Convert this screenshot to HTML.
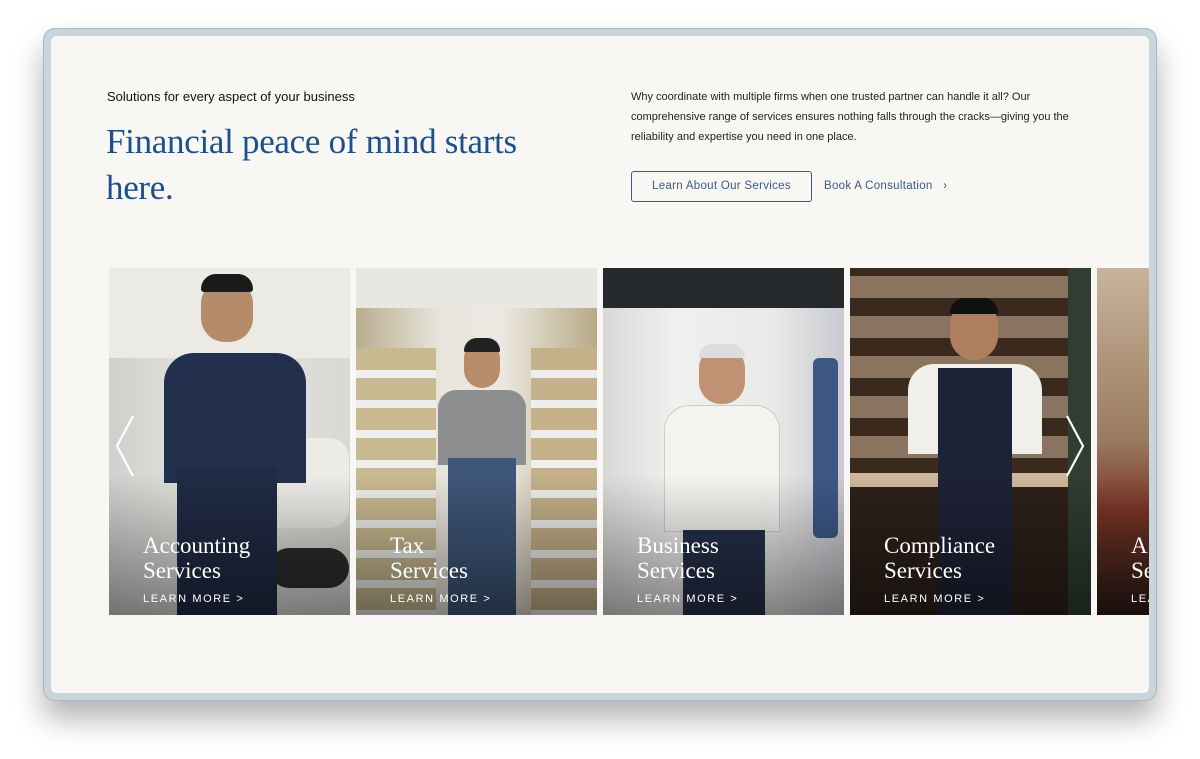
<!DOCTYPE html>
<html><head><meta charset="utf-8"><style>
*{margin:0;padding:0;box-sizing:border-box}
body{width:1200px;height:759px;background:#fff;position:relative;overflow:hidden;font-family:"Liberation Sans",sans-serif}
.frame{position:absolute;left:43px;top:28px;width:1114px;height:673px;border-radius:12px;background:#c8d5da;box-shadow:0 18px 30px rgba(0,0,0,.3);border:1px solid #a9b8be}
.inner{position:absolute;left:51px;top:36px;width:1098px;height:657px;background:#f8f7f3;border-radius:6px;overflow:hidden}
.eyebrow{position:absolute;left:56px;top:53px;font-size:13px;color:#111}
h1{position:absolute;left:55px;top:83px;font-family:"Liberation Serif",serif;font-weight:400;font-size:35px;line-height:46px;color:#1d4f8c;width:460px;letter-spacing:-0.3px}
.desc{position:absolute;left:580px;top:51px;width:450px;font-size:11px;line-height:20px;color:#222}
.btn{position:absolute;left:580px;top:135px;width:181px;height:31px;border:1px solid #3d5a84;border-radius:3px;font-size:11.5px;color:#3d5a84;text-align:center;line-height:29px;letter-spacing:.3px}
.link{position:absolute;left:773px;top:144px;font-size:11.5px;color:#3d5a84;letter-spacing:.3px}
.card{position:absolute;top:232px;width:241px;height:347px;overflow:hidden}
.card .t{position:absolute;left:34px;top:265px;font-family:"Liberation Serif",serif;font-size:23px;line-height:25px;color:#fff}
.card .l{position:absolute;left:34px;top:325px;font-size:11px;letter-spacing:1.6px;color:#fff}
.shade{position:absolute;left:0;right:0;bottom:0;height:140px;background:linear-gradient(rgba(0,0,0,0),rgba(0,0,0,.45))}
.p{position:absolute}
</style></head><body>
<div class="frame"></div>
<div class="inner">
<div class="eyebrow">Solutions for every aspect of your business</div>
<h1>Financial peace of mind starts here.</h1>
<div class="desc">Why coordinate with multiple firms when one trusted partner can handle it all? Our comprehensive range of services ensures nothing falls through the cracks—giving you the reliability and expertise you need in one place.</div>
<div class="btn">Learn About Our Services</div>
<div class="link">Book A Consultation &nbsp;&nbsp;›</div>

<div class="card" style="left:58px;background:linear-gradient(90deg,#cfd0cd,#e4e4e0 40%,#d8d8d5)">
<div class="p" style="left:0;top:0;width:241px;height:90px;background:#eceae5"></div>
<div class="p" style="left:150px;top:170px;width:90px;height:90px;background:#ecebe7;border-radius:20px"></div>
<div class="p" style="left:160px;top:280px;width:80px;height:40px;background:#2e2d2e;border-radius:40px"></div>
<div class="p" style="left:92px;top:10px;width:52px;height:64px;background:#b58c6a;border-radius:26px 26px 24px 24px"></div>
<div class="p" style="left:92px;top:6px;width:52px;height:18px;background:#1a1a1a;border-radius:20px 20px 4px 4px"></div>
<div class="p" style="left:55px;top:85px;width:142px;height:130px;background:#23304d;border-radius:30px 30px 0 0"></div>
<div class="p" style="left:68px;top:200px;width:100px;height:147px;background:#202b45"></div>
<div class="shade"></div>
<div class="t">Accounting<br>Services</div><div class="l">LEARN MORE &gt;</div></div>

<div class="card" style="left:305px;background:linear-gradient(90deg,#b9ad8f,#e8e5dc 35%,#ece9e2 60%,#b8aa88)">
<div class="p" style="left:0;top:0;width:241px;height:40px;background:#e9e7e2"></div>
<div class="p" style="left:0;top:80px;width:80px;height:267px;background:repeating-linear-gradient(#c9b990 0 22px,#eeeeec 22px 30px)"></div>
<div class="p" style="left:175px;top:80px;width:66px;height:267px;background:repeating-linear-gradient(#c4b089 0 22px,#eeeeec 22px 30px)"></div>
<div class="p" style="left:108px;top:72px;width:36px;height:48px;background:#b88d6b;border-radius:18px"></div>
<div class="p" style="left:108px;top:70px;width:36px;height:14px;background:#222;border-radius:18px 18px 2px 2px"></div>
<div class="p" style="left:82px;top:122px;width:88px;height:75px;background:#8d8e8f;border-radius:18px 18px 0 0"></div>
<div class="p" style="left:92px;top:190px;width:68px;height:157px;background:#3e5679"></div>
<div class="shade"></div>
<div class="t">Tax<br>Services</div><div class="l">LEARN MORE &gt;</div></div>

<div class="card" style="left:552px;background:linear-gradient(90deg,#d8d8d6,#f0f0ee 30%,#e9e9e7 70%,#c9cad0)">
<div class="p" style="left:0;top:0;width:241px;height:40px;background:#25292b"></div>
<div class="p" style="left:210px;top:90px;width:25px;height:180px;background:#3e5886;border-radius:6px"></div>
<div class="p" style="left:96px;top:78px;width:46px;height:58px;background:#c09273;border-radius:22px"></div>
<div class="p" style="left:96px;top:76px;width:46px;height:14px;background:#ddd;border-radius:22px 22px 2px 2px"></div>
<div class="p" style="left:62px;top:138px;width:114px;height:125px;background:#f4f3f0;border-radius:24px 24px 0 0;box-shadow:0 0 0 1px #ccc"></div>
<div class="p" style="left:80px;top:262px;width:82px;height:85px;background:#26304a"></div>
<div class="shade"></div>
<div class="t">Business<br>Services</div><div class="l">LEARN MORE &gt;</div></div>

<div class="card" style="left:799px;background:#2d2119">
<div class="p" style="left:0;top:0;width:241px;height:205px;background:repeating-linear-gradient(#3a2a1d 0 8px,#8a7460 8px 30px,#3a2a1d 30px 40px)"></div>
<div class="p" style="left:218px;top:0;width:23px;height:347px;background:#2f3d33"></div>
<div class="p" style="left:0;top:205px;width:218px;height:14px;background:#cdb79a"></div>
<div class="p" style="left:100px;top:32px;width:48px;height:60px;background:#ad7f5f;border-radius:24px"></div>
<div class="p" style="left:100px;top:30px;width:48px;height:16px;background:#111;border-radius:24px 24px 2px 2px"></div>
<div class="p" style="left:58px;top:96px;width:134px;height:90px;background:#f1efea;border-radius:26px 26px 0 0"></div>
<div class="p" style="left:88px;top:100px;width:74px;height:247px;background:#1e2236"></div>
<div class="shade"></div>
<div class="t">Compliance<br>Services</div><div class="l">LEARN MORE &gt;</div></div>

<div class="card" style="left:1046px;width:52px;background:linear-gradient(#c7b49a,#9a7a5e 50%,#7a3526 70%,#2c1d18)">
<div class="shade"></div>
<div class="t">A<br>Se</div><div class="l">LEA</div></div>

<svg style="position:absolute;left:62px;top:378px" width="24" height="64"><path d="M20 2 L4 32 L20 62" fill="none" stroke="#fff" stroke-width="2.2"/></svg>
<svg style="position:absolute;left:1012px;top:378px" width="24" height="64"><path d="M4 2 L20 32 L4 62" fill="none" stroke="#fff" stroke-width="2.2"/></svg>
</div>
</body></html>
